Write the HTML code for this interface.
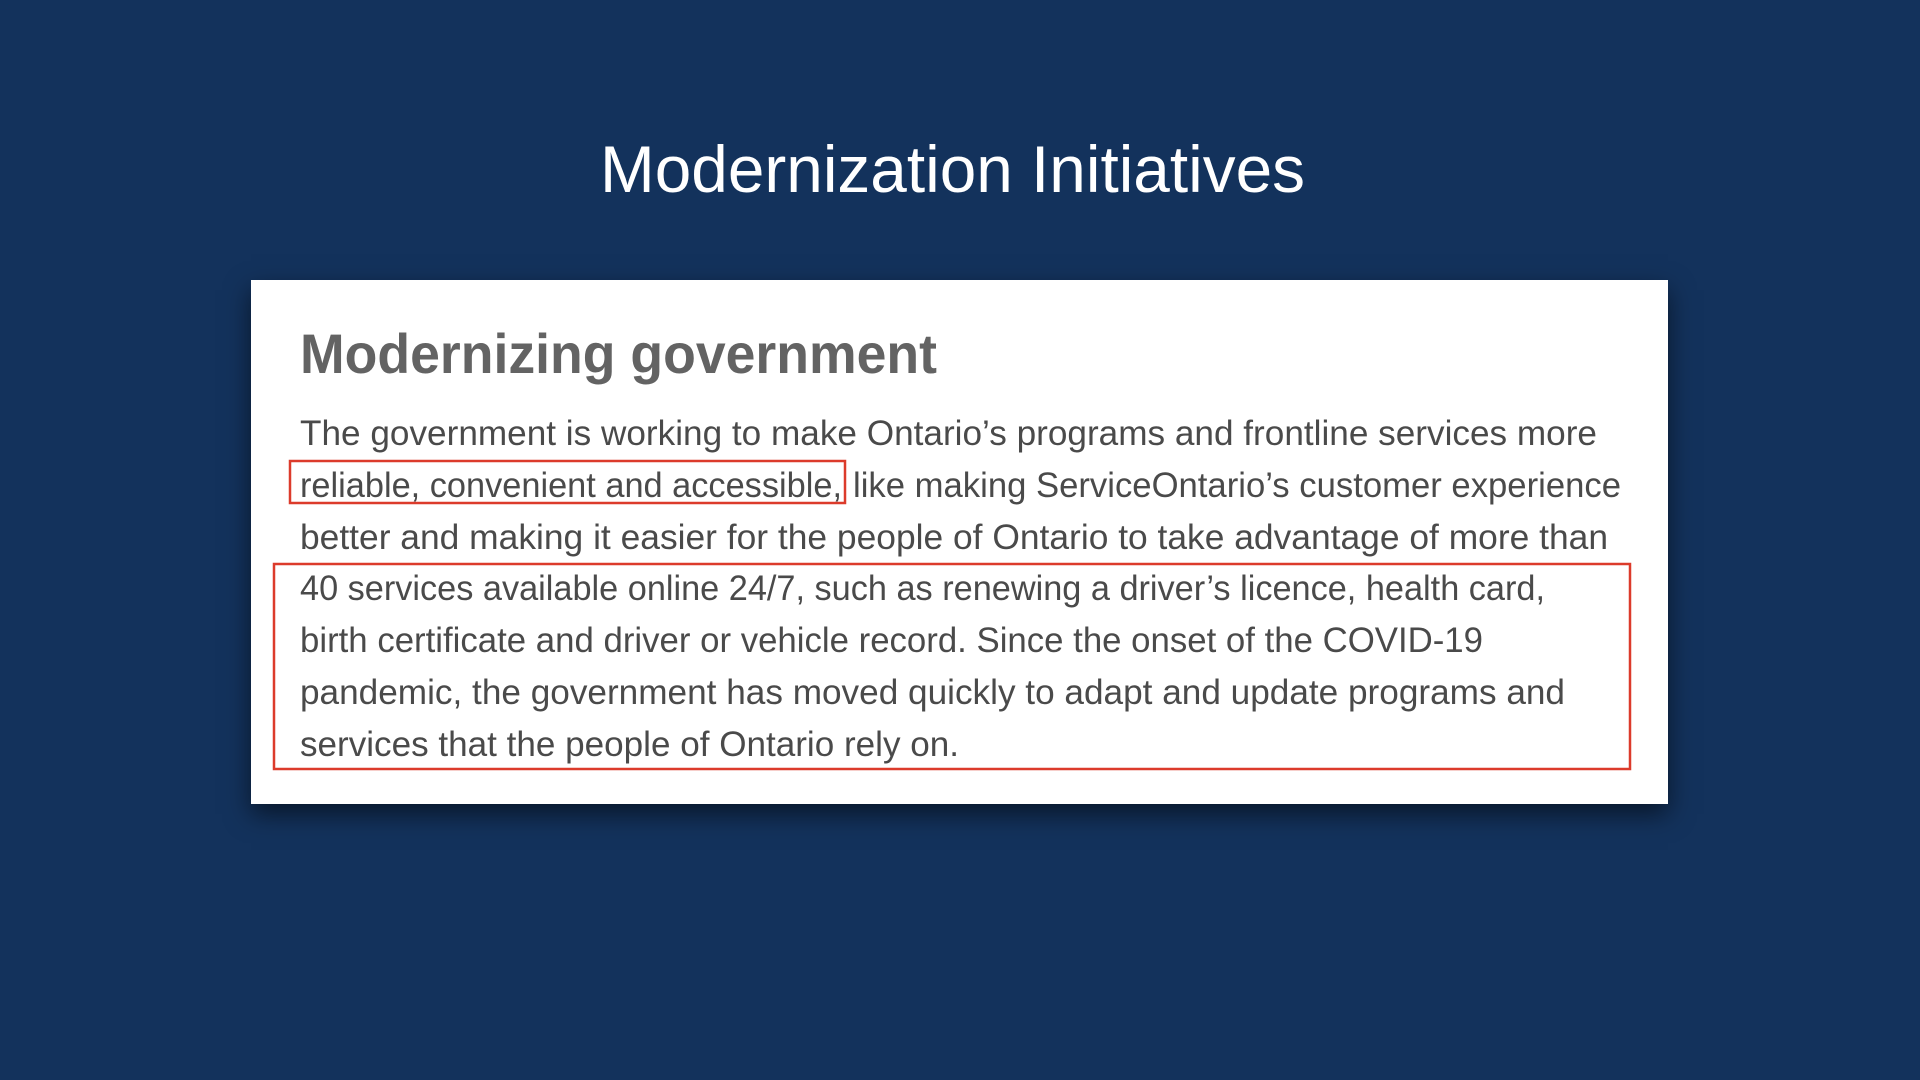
<!DOCTYPE html>
<html><head><meta charset="utf-8"><style>
html,body{margin:0;padding:0;width:1920px;height:1080px;overflow:hidden;background:#13325c;}
.card{position:absolute;left:251px;top:280px;width:1417px;height:524px;background:#fff;box-shadow:0 10px 24px rgba(0,0,0,0.55);}
svg{position:absolute;left:0;top:0;}
</style></head><body>
<div class="card"></div>
<svg width="1920" height="1080" xmlns="http://www.w3.org/2000/svg">
<text x="600" y="192" textLength="705" lengthAdjust="spacingAndGlyphs" font-family="Liberation Sans, sans-serif" font-size="66" fill="#fff">Modernization Initiatives</text>
<text x="300" y="373" textLength="637" lengthAdjust="spacingAndGlyphs" font-family="Liberation Sans, sans-serif" font-weight="bold" font-size="56" fill="#636363">Modernizing government</text>
<g font-family="Liberation Sans, sans-serif" font-size="35" fill="#4a4a4a" lengthAdjust="spacingAndGlyphs">
<text x="300" y="445" textLength="1297" lengthAdjust="spacingAndGlyphs">The government is working to make Ontario’s programs and frontline services more</text>
<text x="300" y="497" textLength="542" lengthAdjust="spacingAndGlyphs">reliable, convenient and accessible,</text>
<text x="853" y="497" textLength="768" lengthAdjust="spacingAndGlyphs">like making ServiceOntario’s customer experience</text>
<text x="300" y="549" textLength="1308" lengthAdjust="spacingAndGlyphs">better and making it easier for the people of Ontario to take advantage of more than</text>
<text x="300" y="600" textLength="1245" lengthAdjust="spacingAndGlyphs">40 services available online 24/7, such as renewing a driver’s licence, health card,</text>
<text x="300" y="652" textLength="1183" lengthAdjust="spacingAndGlyphs">birth certificate and driver or vehicle record. Since the onset of the COVID-19</text>
<text x="300" y="704" textLength="1265" lengthAdjust="spacingAndGlyphs">pandemic, the government has moved quickly to adapt and update programs and</text>
<text x="300" y="756" textLength="659" lengthAdjust="spacingAndGlyphs">services that the people of Ontario rely on.</text>
</g>
<rect x="290" y="461" width="555" height="42" fill="none" stroke="#dc3b2b" stroke-width="2.5"/>
<rect x="274" y="564" width="1356" height="205" fill="none" stroke="#dc3b2b" stroke-width="2.5"/>
</svg>
</body></html>
